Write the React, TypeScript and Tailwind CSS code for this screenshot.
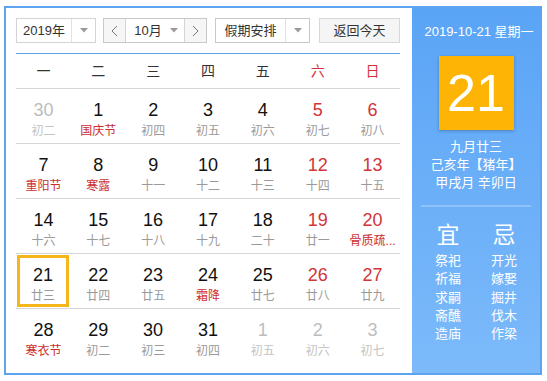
import { FC } from "react";

type Day = { d: number; l: string; other?: boolean; fest?: boolean; today?: boolean };

const weeks: Day[][] = [
  [
    { d: 30, l: "初二", other: true },
    { d: 1, l: "国庆节", fest: true },
    { d: 2, l: "初四" },
    { d: 3, l: "初五" },
    { d: 4, l: "初六" },
    { d: 5, l: "初七" },
    { d: 6, l: "初八" },
  ],
  [
    { d: 7, l: "重阳节", fest: true },
    { d: 8, l: "寒露", fest: true },
    { d: 9, l: "十一" },
    { d: 10, l: "十二" },
    { d: 11, l: "十三" },
    { d: 12, l: "十四" },
    { d: 13, l: "十五" },
  ],
  [
    { d: 14, l: "十六" },
    { d: 15, l: "十七" },
    { d: 16, l: "十八" },
    { d: 17, l: "十九" },
    { d: 18, l: "二十" },
    { d: 19, l: "廿一" },
    { d: 20, l: "骨质疏...", fest: true },
  ],
  [
    { d: 21, l: "廿三", today: true },
    { d: 22, l: "廿四" },
    { d: 23, l: "廿五" },
    { d: 24, l: "霜降", fest: true },
    { d: 25, l: "廿七" },
    { d: 26, l: "廿八" },
    { d: 27, l: "廿九" },
  ],
  [
    { d: 28, l: "寒衣节", fest: true },
    { d: 29, l: "初二" },
    { d: 30, l: "初三" },
    { d: 31, l: "初四" },
    { d: 1, l: "初五", other: true },
    { d: 2, l: "初六", other: true },
    { d: 3, l: "初七", other: true },
  ],
];

const weekNames = ["一", "二", "三", "四", "五", "六", "日"];
const yi = ["祭祀", "祈福", "求嗣", "斋醮", "造庙"];
const ji = ["开光", "嫁娶", "掘井", "伐木", "作梁"];

const Caret: FC = () => (
  <svg width="8" height="5" viewBox="0 0 8 5">
    <path d="M0 0 L8 0 L4 4.5 Z" fill="#9a9a9a" />
  </svg>
);

const Chevron: FC<{ dir: "l" | "r" }> = ({ dir }) => (
  <svg width="7" height="12" viewBox="0 0 7 12">
    <polyline
      points={dir === "l" ? "6,1 1,6 6,11" : "1,1 6,6 1,11"}
      fill="none"
      stroke="#777"
      strokeWidth="1"
    />
  </svg>
);

const Controls: FC = () => (
  <div className="flex h-[25px] text-[13px] text-[#333]">
    <div className="flex w-[80px] border border-[#d4d4d4] bg-white">
      <div className="flex w-[55px] items-center justify-center border-r border-[#e2e2e2]">
        2019年
      </div>
      <div className="flex flex-1 items-center justify-center">
        <Caret />
      </div>
    </div>
    <div className="ml-[7px] flex w-[104px] border border-[#c8c8c8] bg-white">
      <div className="flex w-[22px] items-center justify-center border-r border-[#d4d4d4] bg-[#f6f6f6]">
        <Chevron dir="l" />
      </div>
      <div className="flex flex-1 items-center justify-center gap-[8px] pl-[2px]">
        <span>10月</span>
        <Caret />
      </div>
      <div className="flex w-[22px] items-center justify-center border-l border-[#d4d4d4] bg-[#f6f6f6]">
        <Chevron dir="r" />
      </div>
    </div>
    <div className="ml-[8px] flex w-[95px] border border-[#c8c8c8] bg-white">
      <div className="flex w-[70px] items-center justify-center border-r border-[#e2e2e2]">
        假期安排
      </div>
      <div className="flex flex-1 items-center justify-center">
        <Caret />
      </div>
    </div>
    <div className="ml-[9px] flex w-[81px] items-center justify-center border border-[#d8d8d8] bg-[#f5f5f5]">
      返回今天
    </div>
  </div>
);

const Cell: FC<{ day: Day; col: number }> = ({ day, col }) => {
  const weekend = col >= 5;
  const numColor = day.other ? "text-[#bdbdbd]" : weekend ? "text-[#d2343a]" : "text-[#111]";
  const lunarColor = day.other
    ? "text-[#c4c4c4]"
    : day.fest
      ? "text-[#cc2e2e]"
      : "text-[#9a9a9a]";
  return (
    <div
      className={`flex flex-col items-center ${
        day.today ? "m-[1px] mr-[2px] border-[3px] border-[#f4b61a] pt-[6px]" : "pt-[10px]"
      }`}
    >
      <div className={`font-['Liberation_Sans',sans-serif] text-[18px] leading-[22px] ${numColor}`}>
        {day.d}
      </div>
      <div className={`mt-[2px] whitespace-nowrap text-[12px] leading-[16px] ${lunarColor}`}>
        {day.l}
      </div>
    </div>
  );
};

export default function App() {
  return (
    <div className="h-[381px] w-[547px] bg-white pl-[4px] pt-[6px] font-['Liberation_Sans','Noto_Sans_CJK_SC',sans-serif]">
      <div className="flex h-[369px] w-[538px] border-2 border-[#5ea3ef]">
        <div className="w-[406px] pl-[10px] pr-[12px] pt-[10px]">
          <Controls />
          <div className="mt-[10px] h-px bg-[#5ea3ef]" />
          <div className="grid h-[35px] grid-cols-7 border-b border-[#d6d6d6] text-[14px]">
            {weekNames.map((w, i) => (
              <div
                key={w}
                className={`flex items-center justify-center ${i >= 5 ? "text-[#d2343a]" : "text-[#333]"}`}
              >
                {w}
              </div>
            ))}
          </div>
          {weeks.map((wk, r) => (
            <div
              key={r}
              className={`grid h-[55px] grid-cols-7 ${r < 4 ? "border-b border-[#d6d6d6]" : ""}`}
            >
              {wk.map((day, c) => (
                <Cell key={c} day={day} col={c} />
              ))}
            </div>
          ))}
        </div>
        <div className="flex w-[128px] flex-col items-center bg-linear-to-b from-[#5aa4f6] to-[#7cbafa] pt-[15px] text-white">
          <div className="pl-[6px] text-[13px] leading-[18px]">2019-10-21 星期一</div>
          <div className="mt-[15px] flex h-[74px] w-[75px] items-center justify-center bg-[#fdb404] font-['Liberation_Sans',sans-serif] text-[52px] leading-none shadow-[0_1px_3px_rgba(0,0,0,0.25)]">
            21
          </div>
          <div className="mt-[8px] flex flex-col items-center text-[13px] leading-[18px]">
            <div>九月廿三</div>
            <div>己亥年【猪年】</div>
            <div>甲戌月 辛卯日</div>
          </div>
          <div className="mt-[13px] h-[2px] w-[110px] bg-[#8cc3fb]" />
          <div className="mt-[15px] flex gap-[16px]">
            {[
              { t: "宜", items: yi },
              { t: "忌", items: ji },
            ].map((g) => (
              <div key={g.t} className="flex w-[40px] flex-col items-center">
                <div className="text-[23px] leading-[26px]">{g.t}</div>
                <div className="mt-[4px] flex flex-col items-center text-[13px] leading-[18.3px]">
                  {g.items.map((it) => (
                    <div key={it}>{it}</div>
                  ))}
                </div>
              </div>
            ))}
          </div>
        </div>
      </div>
    </div>
  );
}
